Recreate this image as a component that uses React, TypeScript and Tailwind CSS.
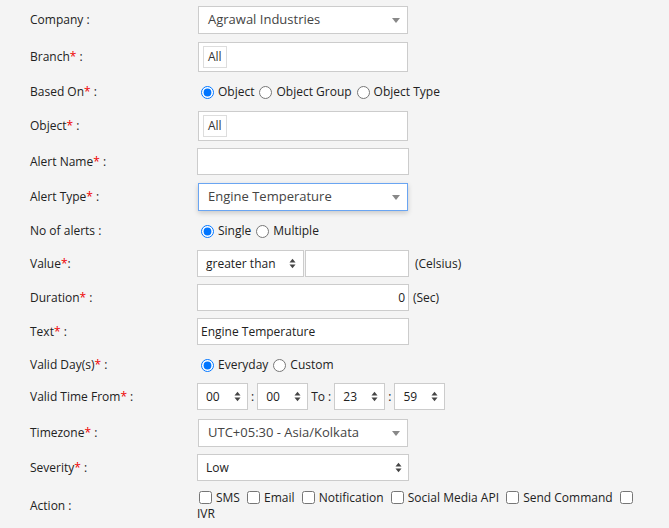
import React from "react";

function Req() {
  return <span className="text-[#e00]">*</span>;
}

function Label({ text, req, sep = " :" }: { text: string; req?: boolean; sep?: string }) {
  return (
    <div className="w-[197px] shrink-0 pl-[30px] text-[12px] text-[#222]">
      {text}
      {req && <Req />}
      {sep}
    </div>
  );
}

function Caret() {
  return (
    <svg width="8" height="5" viewBox="0 0 8 5" className="shrink-0">
      <path d="M0 0h8L4 5z" fill="#888" />
    </svg>
  );
}

function UpDown() {
  return (
    <svg width="7" height="11" viewBox="0 0 7 11" className="shrink-0">
      <path d="M0.5 4.5L3.5 0.8 6.5 4.5z" fill="#444" />
      <path d="M0.5 6.5L3.5 10.2 6.5 6.5z" fill="#444" />
    </svg>
  );
}

function Select2({ value, focus }: { value: string; focus?: boolean }) {
  return (
    <div
      className={`ml-[1px] flex h-[28px] w-[210px] items-center justify-between border bg-white pl-[9px] pr-[7px] text-[13px] text-[#444] ${
        focus ? "border-[#6aa5f2] shadow-[0_2px_5px_rgba(0,0,0,0.18)]" : "border-[#ccc]"
      }`}
    >
      <span>{value}</span>
      <Caret />
    </div>
  );
}

function ChipBox() {
  return (
    <div className="ml-[1px] flex h-[30px] w-[210px] items-center border border-[#ccc] bg-white px-[4px]">
      <span className="flex h-[22px] items-center border border-[#ddd] px-[4px] text-[12px] text-[#333]">All</span>
    </div>
  );
}

function Radio({ label, checked }: { label: string; checked?: boolean }) {
  return (
    <label className="flex items-center">
      <input type="radio" defaultChecked={checked} className="m-0 mx-[4px] h-[13px] w-[13px]" />
      <span>{label}</span>
    </label>
  );
}

function TimeBox({ value }: { value: string }) {
  return (
    <div className="flex h-[27px] w-[51px] items-center justify-between border border-[#ccc] bg-white pl-[8px] pr-[6px] text-[12px] text-[#222]">
      <span>{value}</span>
      <UpDown />
    </div>
  );
}

function Check({ label }: { label: string }) {
  return (
    <>
      <input type="checkbox" className="m-0 ml-[2px] mr-[4px] inline-block h-[13px] w-[13px] align-[-2px]" />
      <span className="mr-[2px]">{label}</span>{" "}
    </>
  );
}

export default function App() {
  return (
    <div className="min-h-screen bg-[#f4f4f4] pt-[6px] font-['Open_Sans',sans-serif] text-[12px] text-[#222]">
      <div className="flex items-center">
        <Label text="Company" />
        <Select2 value="Agrawal Industries" />
      </div>

      <div className="mt-[8px] flex items-center">
        <Label text="Branch" req />
        <ChipBox />
      </div>

      <div className="mt-[10px] flex h-[20px] items-center">
        <Label text="Based On" req />
        <div className="flex items-center gap-[1px]">
          <Radio label="Object" checked />
          <Radio label="Object Group" />
          <Radio label="Object Type" />
        </div>
      </div>

      <div className="mt-[9px] flex items-center">
        <Label text="Object" req />
        <ChipBox />
      </div>

      <div className="mt-[7px] flex items-center">
        <Label text="Alert Name" req />
        <div className="h-[27px] w-[212px] border border-[#ccc] bg-white" />
      </div>

      <div className="mt-[8px] flex items-center">
        <Label text="Alert Type" req />
        <Select2 value="Engine Temperature" focus />
      </div>

      <div className="mt-[10px] flex h-[20px] items-center">
        <Label text="No of alerts" />
        <div className="flex items-center gap-[1px]">
          <Radio label="Single" checked />
          <Radio label="Multiple" />
        </div>
      </div>

      <div className="mt-[9px] flex items-center">
        <Label text="Value" req sep=":" />
        <div className="flex h-[27px] w-[107px] items-center justify-between border border-[#ccc] bg-white pl-[8px] pr-[7px] text-[12px]">
          <span>greater than</span>
          <UpDown />
        </div>
        <div className="ml-[1px] h-[27px] w-[104px] border border-[#ccc] bg-white" />
        <span className="ml-[6px]">(Celsius)</span>
      </div>

      <div className="mt-[7px] flex items-center">
        <Label text="Duration" req />
        <div className="flex h-[27px] w-[212px] items-center justify-end border border-[#ccc] bg-white pr-[3px]">0</div>
        <span className="ml-[4px]">(Sec)</span>
      </div>

      <div className="mt-[7px] flex items-center">
        <Label text="Text" req />
        <div className="flex h-[27px] w-[212px] items-center border border-[#ccc] bg-white pl-[3px]">Engine Temperature</div>
      </div>

      <div className="mt-[10px] flex h-[20px] items-center">
        <Label text="Valid Day(s)" req />
        <div className="flex items-center gap-[1px]">
          <Radio label="Everyday" checked />
          <Radio label="Custom" />
        </div>
      </div>

      <div className="mt-[8px] flex items-center">
        <Label text="Valid Time From" req />
        <TimeBox value="00" />
        <span className="mx-[3px]">:</span>
        <TimeBox value="00" />
        <span className="mx-[3px]">To :</span>
        <TimeBox value="23" />
        <span className="mx-[3px]">:</span>
        <TimeBox value="59" />
      </div>

      <div className="mt-[9px] flex items-center">
        <Label text="Timezone" req />
        <Select2 value="UTC+05:30 - Asia/Kolkata" />
      </div>

      <div className="mt-[7px] flex items-center">
        <Label text="Severity" req />
        <div className="flex h-[27px] w-[212px] items-center justify-between border border-[#ccc] bg-white pl-[8px] pr-[6px] text-[12px]">
          <span>Low</span>
          <UpDown />
        </div>
      </div>

      <div className="mt-[9px] flex items-center">
        <Label text="Action" />
        <div className="w-[440px] text-[12px] leading-[16px]">
          <Check label="SMS" />
          <Check label="Email" />
          <Check label="Notification" />
          <Check label="Social Media API" />
          <Check label="Send Command" />
          <Check label="IVR" />
        </div>
      </div>
    </div>
  );
}
